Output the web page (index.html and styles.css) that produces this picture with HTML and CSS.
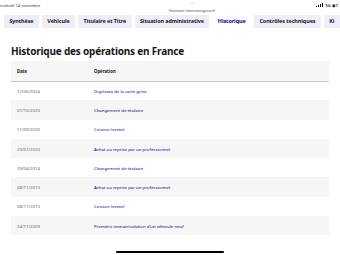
FILE: index.html
```html
<!DOCTYPE html>
<html lang="fr">
<head>
    <meta charset="UTF-8">
    <meta name="viewport" content="width=device-width, initial-scale=1.0">
    <title>HistoVec - Historique</title>
    <link rel="stylesheet" href="styles.css">
</head>
<body>
    <div class="ecran">
        <div class="barre-statut">
            <span class="date">endredi 14 novembre</span>
            <div class="centre">
                <span class="points">&middot;&middot;&middot;</span>
                <span class="url">histovec.interieur.gouv.fr</span>
            </div>
            <span class="reseau">
                <svg width="7" height="4" viewBox="0 0 7 4"><rect x="0" y="3" width="1" height="1"/><rect x="2" y="2" width="1" height="2"/><rect x="4" y="1" width="1" height="3"/><rect x="6" y="0" width="1" height="4"/></svg>
                5G &#9673; 7
            </span>
        </div>
        <div class="onglets">
            <div class="onglet">Synthèse</div>
            <div class="onglet">Véhicule</div>
            <div class="onglet">Titulaire et Titre</div>
            <div class="onglet">Situation administrative</div>
            <div class="onglet actif">Historique</div>
            <div class="onglet">Contrôles techniques</div>
            <div class="onglet">Ki</div>
        </div>
        <div class="contenu">
            <h1>Historique des opérations en France</h1>
            <table class="historique">
                <thead>
                    <tr><th class="col-date">Date</th><th>Opération</th></tr>
                </thead>
                <tbody>
                    <tr><td class="col-date">12/06/2024</td><td><a href="#">Duplicata de la carte grise</a></td></tr>
                    <tr><td class="col-date">01/10/2020</td><td><a href="#">Changement de titulaire</a></td></tr>
                    <tr><td class="col-date">11/09/2020</td><td><a href="#">Cession (vente)</a></td></tr>
                    <tr><td class="col-date">29/07/2020</td><td><a href="#">Achat ou reprise par un professionnel</a></td></tr>
                    <tr><td class="col-date">29/04/2014</td><td><a href="#">Changement de titulaire</a></td></tr>
                    <tr><td class="col-date">08/11/2013</td><td><a href="#">Achat ou reprise par un professionnel</a></td></tr>
                    <tr><td class="col-date">08/11/2013</td><td><a href="#">Cession (vente)</a></td></tr>
                    <tr><td class="col-date">24/11/2009</td><td><a href="#">Première immatriculation d'un véhicule neuf</a></td></tr>
                </tbody>
            </table>
        </div>
        <div class="barre-accueil"></div>
    </div>
</body>
</html>
```

FILE: styles.css
```css
* {
    margin: 0;
    padding: 0;
    box-sizing: border-box;
}
body {
    font-family: "Noto Sans", sans-serif;
    background: #fff;
    color: #161616;
    overflow: hidden;
}
.ecran {
    position: relative;
    width: 340px;
    height: 255px;
    overflow: hidden;
}
.barre-statut {
    display: flex;
    justify-content: space-between;
    height: 15px;
    font-size: 4px;
    color: #333;
}
.date {
    padding-top: 3px;
}
.centre {
    display: flex;
    flex-direction: column;
    align-items: center;
    margin-left: 28px;
}
.points {
    font-size: 6px;
    line-height: 6px;
    color: #666;
}
.url {
    margin-top: 2px;
    color: #444;
}
.reseau {
    display: flex;
    gap: 2px;
    align-items: center;
    height: 10px;
    padding-right: 2px;
    font-weight: bold;
}
.onglets {
    display: flex;
    gap: 3px;
    padding-left: 4px;
    height: 13px;
    white-space: nowrap;
}
.onglet {
    flex-shrink: 0;
    background: #eeeef8;
    color: #161616;
    font-size: 5.4px;
    font-weight: bold;
    line-height: 13px;
    padding: 0 5.4px;
    letter-spacing: -0.05px;
}
.onglet.actif {
    background: #fff;
    color: #000091;
}
.contenu {
    padding: 0 11px;
}
h1 {
    font-size: 10px;
    font-weight: bold;
    margin-top: 16px;
    margin-bottom: 3px;
    letter-spacing: -0.2px;
}
.historique {
    width: 318px;
    border-collapse: collapse;
    font-size: 4.3px;
}
.historique th {
    text-align: left;
    font-weight: bold;
    background: #f6f6f6;
    height: 20px;
    border-bottom: 1px solid #c8c8c8;
}
.historique td {
    height: 19.3px;
    color: #666;
}
.historique th, .historique td {
    padding-left: 6px;
}
.historique .col-date {
    width: 77px;
}
.historique tbody tr:nth-child(even) {
    background: #f6f6f6;
}
.historique a {
    color: #000091;
    text-decoration: none;
}
.barre-accueil {
    position: absolute;
    left: 116px;
    bottom: 2px;
    width: 108px;
    height: 2px;
    border-radius: 1px;
    background: #000;
}
```
